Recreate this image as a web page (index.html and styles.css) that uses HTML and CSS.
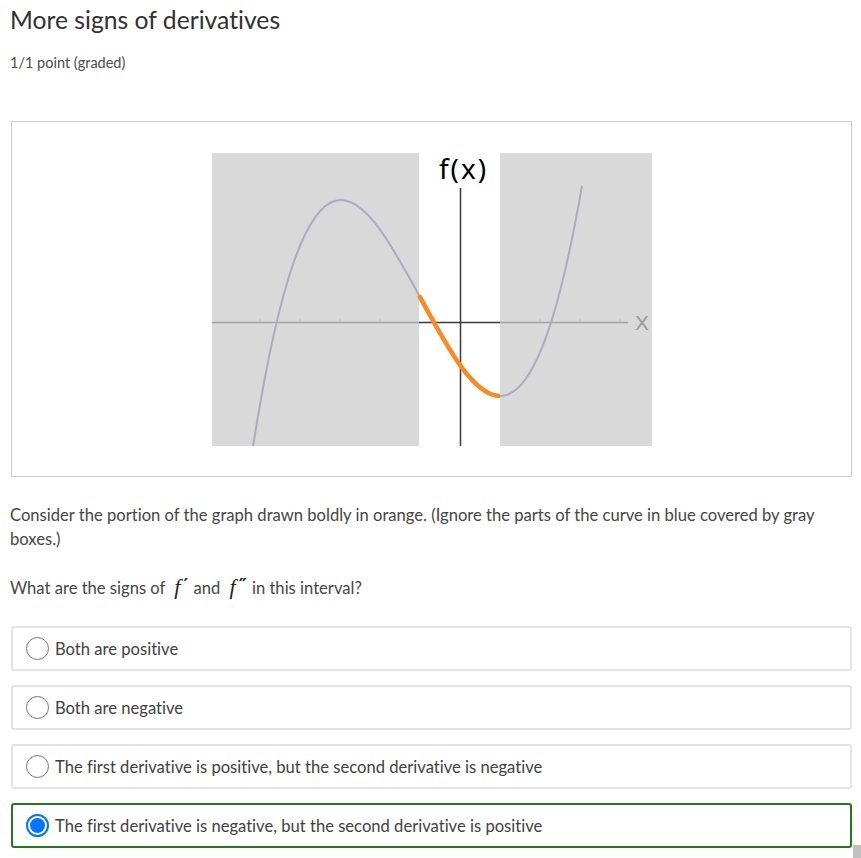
FILE: index.html
```html
<!DOCTYPE html>
<html lang="en">
<head>
<meta charset="utf-8">
<title>More signs of derivatives</title>
<link rel="stylesheet" href="styles.css">
</head>
<body>
<main class="page">
  <h1 class="title">More signs of derivatives</h1>
  <div class="points">1/1 point (graded)</div>

  <div class="figure">
    <svg class="graph" width="440" height="298" viewBox="212 150 440 298" xmlns="http://www.w3.org/2000/svg">
      <defs>
        <clipPath id="plotclip"><rect x="212" y="153" width="440" height="293"/></clipPath>
      </defs>
      <rect x="212" y="153" width="207" height="293" fill="#d9d9d9"/>
      <rect x="500" y="153" width="152" height="293" fill="#d9d9d9"/>
      <g stroke="#bdbdbd" stroke-width="1">
        <line x1="260" y1="318.5" x2="260" y2="322"/>
        <line x1="300" y1="318.5" x2="300" y2="322"/>
        <line x1="340" y1="318.5" x2="340" y2="322"/>
        <line x1="380" y1="318.5" x2="380" y2="322"/>
        <line x1="540" y1="318.5" x2="540" y2="322"/>
        <line x1="580" y1="318.5" x2="580" y2="322"/>
        <line x1="620" y1="318.5" x2="620" y2="322"/>
      </g>
      <line x1="212" y1="322.5" x2="419" y2="322.5" stroke="#a3a3a3" stroke-width="1.5"/>
      <line x1="500" y1="322.5" x2="628" y2="322.5" stroke="#a3a3a3" stroke-width="1.5"/>
      <line x1="419" y1="322.5" x2="500" y2="322.5" stroke="#3a3a3a" stroke-width="1.5"/>
      <line x1="460.5" y1="188" x2="460.5" y2="446" stroke="#3a3a3a" stroke-width="1.5"/>
      <path d="M252,452.98 C362,-257.33 472,821.82 582,185.84" fill="none" stroke="#aaaac6" stroke-width="2" clip-path="url(#plotclip)"/>
      <path d="M419,295.2 C446,345.14 473,396 500,396" fill="none" stroke="#fb8a24" stroke-width="4.5"/>
      <text x="463.5" y="179" class="fx">f(x)</text>
      <text x="642" y="330" class="xlabel">X</text>
    </svg>
  </div>

  <p class="prompt">Consider the portion of the graph drawn boldly in orange. (Ignore the parts of the curve in blue covered by gray boxes.)</p>
  <p class="question">What are the signs of <span class="math"><span class="mi">f</span><span class="prime">′</span></span> and <span class="math"><span class="mi">f</span><span class="prime">″</span></span> in this interval?</p>

  <div class="options">
    <label class="option">
      <span class="radio"></span>
      <span class="opt-text">Both are positive</span>
    </label>
    <label class="option">
      <span class="radio"></span>
      <span class="opt-text">Both are negative</span>
    </label>
    <label class="option">
      <span class="radio"></span>
      <span class="opt-text">The first derivative is positive, but the second derivative is negative</span>
    </label>
    <label class="option option-correct">
      <span class="radio radio-checked"></span>
      <span class="opt-text">The first derivative is negative, but the second derivative is positive</span>
    </label>
  </div>
</main>
<div class="scroll-thumb"></div>
</body>
</html>
```

FILE: styles.css
```css
html, body {
  margin: 0;
  padding: 0;
  background: #ffffff;
}

body {
  font-family: "Lato", "Noto Sans", sans-serif;
  font-variant-ligatures: none;
  color: #454545;
  overflow: hidden;
}

.page {
  width: 841px;
  padding: 0 9px 0 11px;
}

.title {
  margin: 0 0 0 -1px;
  padding-top: 4px;
  font-size: 24.7px;
  font-weight: 400;
  line-height: 32px;
  color: #313131;
}

.points {
  margin: 17px 0 0 -1px;
  font-size: 14.5px;
  line-height: 20px;
  color: #4b4b4b;
}

.figure {
  margin-top: 48px;
  height: 354px;
  border: 1px solid #cccccc;
  display: flex;
  align-items: center;
  justify-content: center;
}

.graph {
  display: block;
}

.fx {
  font-family: "Noto Sans", "Open Sans", sans-serif;
  font-size: 28px;
  letter-spacing: 2px;
  fill: #000000;
  text-anchor: middle;
}

.xlabel {
  font-family: "Liberation Sans", sans-serif;
  font-size: 21px;
  fill: #9a9a9a;
  text-anchor: middle;
}

.prompt {
  margin: 26px 0 0 -1px;
  font-size: 16.6px;
  line-height: 24px;
}

.question {
  margin: 25px 0 0 -1px;
  font-size: 16.6px;
  line-height: 24px;
  height: 24px;
}

.math {
  font-family: "Liberation Serif", "DejaVu Serif", serif;
  font-size: 22px;
  line-height: 16px;
  color: #222222;
  padding: 0 1px 0 5px;
}

.mi {
  font-style: italic;
}

.prime {
  font-family: "DejaVu Sans", sans-serif;
  font-size: 18px;
  font-weight: 700;
  line-height: 0;
  position: relative;
  top: -3px;
  margin-left: 3px;
}

.options {
  margin-top: 26px;
  display: flex;
  flex-direction: column;
  gap: 14px;
}

.option {
  height: 41px;
  border: 2px solid #e3e3e3;
  border-radius: 3px;
  display: flex;
  align-items: center;
  padding-left: 13px;
  font-size: 16.6px;
  color: #414141;
}

.option-correct {
  border-color: #23791b;
}

.radio {
  box-sizing: border-box;
  width: 23px;
  height: 23px;
  border: 1.5px solid #767676;
  border-radius: 50%;
  background: #ffffff;
  margin-right: 6px;
  flex: none;
}

.radio-checked {
  border: 2px solid #0075ff;
  padding: 2px;
  background: #0075ff content-box;
}

.scroll-thumb {
  position: absolute;
  left: 853px;
  top: 845px;
  width: 8px;
  height: 13px;
  background: #c1c1c1;
}
```
